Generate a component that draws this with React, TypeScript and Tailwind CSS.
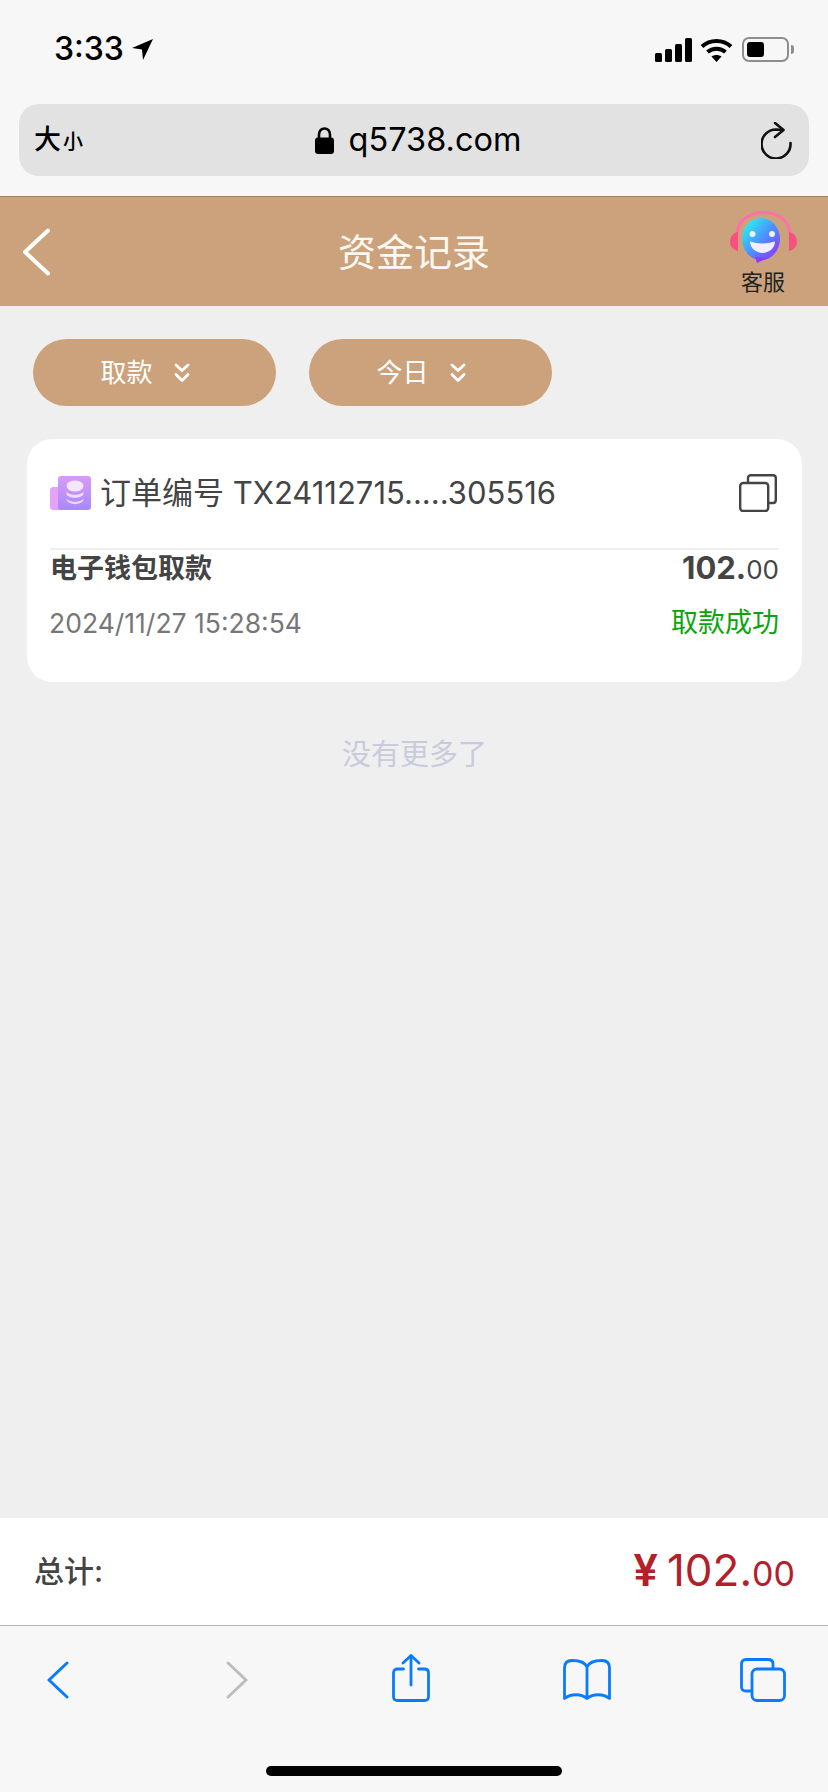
const cjk = '[font-family:Inter,"Noto_Sans_CJK_SC",sans-serif]';

function StatusIcons() {
  return (
    <div className="flex items-center">
      <svg width="37" height="24" viewBox="0 0 37 24" fill="#000">
        <rect x="0" y="15" width="7" height="9" rx="1.5" />
        <rect x="10" y="11" width="7" height="13" rx="1.5" />
        <rect x="20" y="6" width="7" height="18" rx="1.5" />
        <rect x="30" y="0" width="7" height="24" rx="1.5" />
      </svg>
      <svg className="ml-[8px]" width="33" height="24" viewBox="0 0 33 24" fill="none" stroke="#000" strokeWidth="4">
        <path d="M2 8.5C10 1 23 1 31 8.5" />
        <path d="M7.5 14C12.5 9.5 20.5 9.5 25.5 14" />
        <path d="M16.5 24L11.5 18.5C14.5 16.5 18.5 16.5 21.5 18.5Z" fill="#000" stroke="none" />
      </svg>
      <div className="ml-[9px] flex h-[25px] w-[47px] items-center rounded-[7px] border-2 border-[#8e8e8e] p-[3px]">
        <div className="h-full w-[17px] rounded-[3px] bg-black" />
      </div>
      <div className="ml-[2px] h-[9px] w-[3px] rounded-r-full bg-[#8e8e8e]" />
    </div>
  );
}

function SupportIcon() {
  return (
    <svg width="67" height="52" viewBox="0 0 67 52">
      <defs>
        <linearGradient id="face" x1="0.1" y1="0.1" x2="0.9" y2="0.9">
          <stop offset="0" stopColor="#2af0ee" />
          <stop offset="0.55" stopColor="#4f8bff" />
          <stop offset="1" stopColor="#8a3cff" />
        </linearGradient>
      </defs>
      <path d="M7 24C7 -6 60 -6 60 24" fill="none" stroke="#ff6fa8" strokeWidth="3" />
      <path d="M8 21C3 22 0 26 0 30.5C0 35 3 39 8 40Z" fill="#f9507f" />
      <path d="M59 21C64 22 67 26 67 30.5C67 35 64 39 59 40Z" fill="#f9507f" />
      <ellipse cx="31" cy="28" rx="19" ry="21" fill="url(#face)" />
      <path d="M25 46L38 47L27 52Z" fill="#8a3cff" />
      <circle cx="22.5" cy="23" r="3" fill="#e9f3ff" />
      <circle cx="42" cy="23" r="3" fill="#e9f3ff" />
      <path d="M20 30.5C28 33 36 33 45 30.5C45 37 39 42 32.5 42C26 42 20 37 20 30.5Z" fill="#f1eeff" />
    </svg>
  );
}

function DoubleChevron() {
  return (
    <svg width="16" height="20" viewBox="0 0 16 20" fill="none" stroke="#fff" strokeWidth="2.8" strokeLinecap="round" strokeLinejoin="round">
      <path d="M2 2L8 7.5L14 2" />
      <path d="M2 11.5L8 17.5L14 11.5" />
    </svg>
  );
}

function FilterButton({ label }: { label: string }) {
  return (
    <div className="flex h-[67px] w-[243px] items-center justify-center gap-[21px] rounded-[34px] bg-[#cba27b] pr-[19px] text-[26px] text-white">
      <span>{label}</span>
      <DoubleChevron />
    </div>
  );
}

function OrderIcon() {
  return (
    <svg width="41" height="35" viewBox="0 0 41 35">
      <defs>
        <linearGradient id="card" x1="0" y1="0" x2="0" y2="1">
          <stop offset="0" stopColor="#d79cf6" />
          <stop offset="1" stopColor="#a888fb" />
        </linearGradient>
      </defs>
      <path d="M3 11H12V34H3C1.3 34 0 32.7 0 31V14C0 12.3 1.3 11 3 11Z" fill="#e6a3f5" />
      <rect x="8" y="0" width="33" height="34" rx="3" fill="url(#card)" />
      <ellipse cx="25" cy="10" rx="8.5" ry="5.5" fill="#f6e6fd" />
      <path d="M16.5 15C18 20 32 20 33.5 15V18C32 23 18 23 16.5 18Z" fill="#f0dcfb" />
      <path d="M16.5 22C18 27 32 27 33.5 22V24C31 29.5 19 29.5 16.5 24Z" fill="#ecd8fb" />
    </svg>
  );
}

function CopyIcon() {
  return (
    <svg className="mr-[2px]" width="38" height="38" viewBox="0 0 38 38" fill="none" stroke="#444" strokeWidth="2.4">
      <rect x="1.2" y="9" width="28" height="28" rx="3" />
      <path d="M9 9V4C9 2.3 10.3 1.2 12 1.2H34C35.7 1.2 36.8 2.3 36.8 4V26C36.8 27.7 35.7 29 34 29H29" />
    </svg>
  );
}

export default function App() {
  return (
    <div className={`flex h-[1792px] w-[828px] flex-col overflow-hidden bg-[#efefef] ${cjk}`}>
      {/* safari top */}
      <div className="h-[196px] shrink-0 bg-[#f7f7f7] px-[19px]">
        <div className="flex h-[104px] items-start justify-between pl-[35px] pr-[15px] pt-[30px]">
          <div className="flex items-center">
            <span className="text-[32px] font-medium leading-[38px] text-black">3:33</span>
            <svg className="ml-[8px]" width="21" height="21" viewBox="0 0 20 20" fill="#000">
              <path d="M20 0L0 8.5L9.5 10L10.5 20Z" />
            </svg>
          </div>
          <div className="pt-[7px]">
            <StatusIcons />
          </div>
        </div>
        <div className="flex h-[72px] items-center justify-between rounded-[20px] bg-[#e2e2e2] pl-[15px] pr-[17px]">
          <div className="flex w-[48px] items-baseline font-medium text-black">
            <span className="text-[27px]">大</span>
            <span className="ml-[2px] text-[20px]">小</span>
          </div>
          <div className="mr-[7px] flex items-center gap-[15px] text-black">
            <svg width="19" height="27" viewBox="0 0 19 27" fill="#000">
              <path d="M4 12V7.5C4 -0.5 15 -0.5 15 7.5V12" fill="none" stroke="#000" strokeWidth="2.6" />
              <rect x="0" y="10.5" width="19" height="16.5" rx="3" />
            </svg>
            <span className="text-[32.5px] leading-[40px]">q5738.com</span>
          </div>
          <svg width="31" height="37" viewBox="0 0 31 37" fill="none" stroke="#111" strokeWidth="2.6" strokeLinecap="round" strokeLinejoin="round">
            <path d="M29.5 21A14.5 14.5 0 1 1 15 7.5L22 8" />
            <path d="M14 1L22.5 8L14 15" />
          </svg>
        </div>
      </div>

      {/* nav */}
      <div className="flex h-[110px] shrink-0 items-center justify-between border-t border-[#a5805f] bg-[#cba27b] pl-[22px] pr-[31px]">
        <div className="w-[100px]">
          <svg width="29" height="48" viewBox="0 0 29 48" fill="none" stroke="#fff" strokeWidth="4" strokeLinecap="round" strokeLinejoin="round">
            <path d="M26 2.5L3 24L26 45.5" />
          </svg>
        </div>
        <span className="ml-[9px] text-[38px] leading-[44px] text-[#fdf8f2]">资金记录</span>
        <div className="flex w-[100px] flex-col items-end pt-[4px]">
          <SupportIcon />
          <span className="mr-[12px] mt-[5px] text-[22px] leading-[28px] text-[#222]">客服</span>
        </div>
      </div>

      {/* content */}
      <div className="flex flex-1 flex-col pl-[27px] pr-[26px] pt-[33px]">
        <div className="flex gap-[33px] pl-[6px]">
          <FilterButton label="取款" />
          <FilterButton label="今日" />
        </div>
        <div className="mt-[33px] h-[243px] rounded-[25px] bg-white px-[23px]">
          <div className="flex h-[111px] items-center justify-between border-b-2 border-[#efefef] pb-[3px] pt-[2px]">
            <div className="flex items-center gap-[9px]">
              <OrderIcon />
              <span className="text-[31px] leading-[40px] text-[#444]">订单编号 TX24112715.....305516</span>
            </div>
            <CopyIcon />
          </div>
          <div className="mt-[2px] flex h-[34px] items-center justify-between font-bold text-[#444]">
            <span className="text-[27px] leading-[34px]">电子钱包取款</span>
            <span className="text-[31px] leading-[34px]">
              102.<span className="text-[26px] font-normal">00</span>
            </span>
          </div>
          <div className="mt-[19px] flex items-center justify-between">
            <span className="-ml-[1px] text-[26.5px] leading-[36px] text-[#777]">2024/11/27 15:28:54</span>
            <span className="text-[27px] leading-[36px] text-[#0aa50a]">取款成功</span>
          </div>
        </div>
        <div className="mt-[54px] text-center text-[29px] leading-[38px] text-[#c9cbdc]">没有更多了</div>
      </div>

      {/* total */}
      <div className="flex h-[107px] shrink-0 items-center justify-between bg-white pl-[34px] pr-[33px]">
        <span className="text-[30px] font-medium text-[#444]">总计:</span>
        <span className="flex items-baseline text-[44px] leading-[54px] text-[#b3202a]">
          <span className="mr-[9px] font-semibold">¥</span>102.<span className="text-[34px]">00</span>
        </span>
      </div>

      {/* safari bottom */}
      <div className="flex h-[167px] shrink-0 flex-col border-t border-[#b5b5b5] bg-[#f7f7f7]">
        <div className="flex h-[100px] items-center justify-between pb-[6px] pl-[34px] pr-[41px] pt-[14px]">
          <div className="flex w-[48px] justify-center">
            <svg width="22" height="38" viewBox="0 0 22 38" fill="none" stroke="#0a7aff" strokeWidth="3" strokeLinecap="round" strokeLinejoin="round">
              <path d="M20 2L2 19L20 36" />
            </svg>
          </div>
          <div className="flex w-[48px] justify-center pl-[5px]">
            <svg width="22" height="38" viewBox="0 0 22 38" fill="none" stroke="#bdbdbd" strokeWidth="3" strokeLinecap="round" strokeLinejoin="round">
              <path d="M2 2L20 19L2 36" />
            </svg>
          </div>
          <div className="mb-[5px] flex w-[48px] justify-center">
            <svg width="38" height="48" viewBox="0 0 38 48" fill="none" stroke="#0a7aff" strokeWidth="2.8" strokeLinecap="round" strokeLinejoin="round">
              <path d="M11.5 15H5.5C3 15 1.5 16.5 1.5 19V42.5C1.5 45 3 46.5 5.5 46.5H32.5C35 46.5 36.5 45 36.5 42.5V19C36.5 16.5 35 15 32.5 15H26.5" />
              <path d="M19 31V2" />
              <path d="M11 9L19 1.5L27 9" />
            </svg>
          </div>
          <div className="flex w-[48px] justify-center">
            <svg width="48" height="42" viewBox="0 0 48 42" fill="none" stroke="#0a7aff" strokeWidth="2.8" strokeLinecap="round" strokeLinejoin="round">
              <path d="M24 8C22 3 15 1.5 9 1.5C4 1.5 1.5 4 1.5 9V39.5C8 34.5 18 34.5 24 39.5C30 34.5 40 34.5 46.5 39.5V9C46.5 4 44 1.5 39 1.5C33 1.5 26 3 24 8V39.5" />
            </svg>
          </div>
          <div className="flex w-[48px] justify-center">
            <svg width="46" height="44" viewBox="0 0 46 44" fill="none" stroke="#0a7aff" strokeWidth="2.8">
              <path d="M11 33H6C3 33 1.5 31.5 1.5 29V6C1.5 3 3 1.5 6 1.5H28C31 1.5 33 3 33 6V11" />
              <rect x="12" y="11" width="32.5" height="31.5" rx="5" />
            </svg>
          </div>
        </div>
        <div className="mx-auto mt-[40px] h-[10px] w-[296px] rounded-full bg-black" />
      </div>
    </div>
  );
}
